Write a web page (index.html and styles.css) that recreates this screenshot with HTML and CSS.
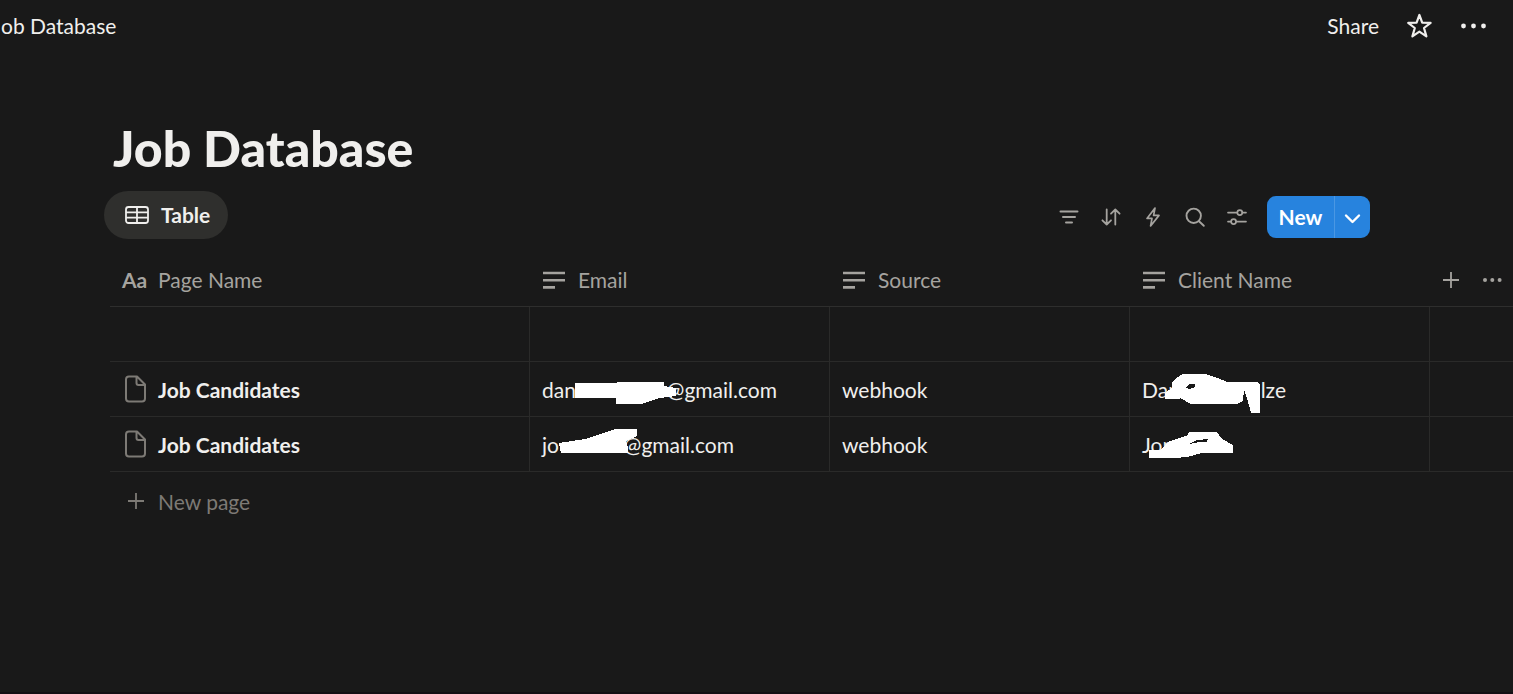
FILE: index.html
```html
<!DOCTYPE html>
<html lang="en">
<head>
    <meta charset="UTF-8">
    <meta name="viewport" content="width=device-width, initial-scale=1.0">
    <title>Job Database</title>
    <link rel="stylesheet" href="styles.css">
</head>
<body>
    <header class="topbar">
        <a class="breadcrumb" href="#">ob Database</a>
        <div class="topbar-actions">
            <button class="share-btn" type="button">Share</button>
            <button class="icon-btn light" type="button" aria-label="Favorite">
                <svg width="28" height="28" viewBox="0 0 28 28" fill="none" stroke="currentColor" stroke-width="2.2" stroke-linejoin="round"><path d="M14.4 3 L17.2 10.6 L25.6 10.9 L19 16 L21.4 24.4 L14.4 19.7 L7.4 24.4 L9.8 16 L3.2 10.9 L11.6 10.6 Z"/></svg>
            </button>
            <button class="icon-btn light" type="button" aria-label="More">
                <svg width="28" height="28" viewBox="0 0 28 28" fill="currentColor"><circle cx="4.5" cy="14" r="2.4"/><circle cx="14.5" cy="14" r="2.4"/><circle cx="24.5" cy="14" r="2.4"/></svg>
            </button>
        </div>
    </header>

    <main>
        <h1>Job Database</h1>

        <div class="toolbar">
            <button class="view-tab" type="button">
                <svg width="24" height="20" viewBox="0 0 24 20" fill="none" stroke="currentColor" stroke-width="1.8"><rect x="1" y="2" width="22" height="16" rx="2.5"/><path d="M1 7.3 H23 M1 12.7 H23 M12 2 V18"/></svg>
                Table
            </button>
            <div class="tools">
                <button class="icon-btn" type="button" aria-label="Filter">
                    <svg width="22" height="22" viewBox="0 0 22 22" fill="none" stroke="currentColor" stroke-width="2" stroke-linecap="round"><path d="M2.5 5.5 H19.5 M5 11 H17 M8 16.5 H14"/></svg>
                </button>
                <button class="icon-btn" type="button" aria-label="Sort">
                    <svg width="22" height="22" viewBox="0 0 22 22" fill="none" stroke="currentColor" stroke-width="1.8" stroke-linecap="round" stroke-linejoin="round"><path d="M6.7 3.5 V18.5 M2.4 14.3 L6.7 18.5 L11 14.3 M15.3 18.5 V3.5 M11 7.7 L15.3 3.5 L19.6 7.7"/></svg>
                </button>
                <button class="icon-btn" type="button" aria-label="Automations">
                    <svg width="22" height="22" viewBox="0 0 22 22" fill="none" stroke="currentColor" stroke-width="1.7" stroke-linejoin="round"><path d="M13 2 L5 12.4 H10 L8.6 20 L17 9.4 H11.6 Z"/></svg>
                </button>
                <button class="icon-btn" type="button" aria-label="Search">
                    <svg width="22" height="22" viewBox="0 0 22 22" fill="none" stroke="currentColor" stroke-width="1.9" stroke-linecap="round"><circle cx="9.7" cy="9.8" r="7.2"/><path d="M15 15.2 L19.8 19.8"/></svg>
                </button>
                <button class="icon-btn" type="button" aria-label="Settings">
                    <svg width="22" height="22" viewBox="0 0 22 22" fill="none" stroke="currentColor" stroke-width="1.7" stroke-linecap="round"><path d="M2 6.6 H11.2 M16.4 6.6 H20 M2 15.6 H5 M10.2 15.6 H20"/><circle cx="13.8" cy="6.6" r="2.5"/><circle cx="7.6" cy="15.6" r="2.5"/></svg>
                </button>
                <div class="new-group">
                    <button class="new-btn" type="button">New</button>
                    <button class="new-more" type="button" aria-label="New options">
                        <svg width="18" height="14" viewBox="0 0 18 14" fill="none" stroke="currentColor" stroke-width="2.4" stroke-linecap="round" stroke-linejoin="round"><path d="M2 5.5 L8.5 12 L15 5.5"/></svg>
                    </button>
                </div>
            </div>
        </div>

        <table>
            <colgroup>
                <col class="col-name">
                <col class="col-text">
                <col class="col-text">
                <col class="col-text">
                <col>
            </colgroup>
            <thead>
                <tr>
                    <th scope="col">
                        <div class="head"><span class="aa" aria-hidden="true">Aa</span>Page Name</div>
                    </th>
                    <th scope="col">
                        <div class="head">
                            <svg width="24" height="20" viewBox="0 0 24 20" stroke="currentColor" stroke-width="2.6"><path d="M1 3 H23 M1 10.2 H23 M1 17.4 H13"/></svg>
                            Email
                        </div>
                    </th>
                    <th scope="col">
                        <div class="head">
                            <svg width="24" height="20" viewBox="0 0 24 20" stroke="currentColor" stroke-width="2.6"><path d="M1 3 H23 M1 10.2 H23 M1 17.4 H13"/></svg>
                            Source
                        </div>
                    </th>
                    <th scope="col">
                        <div class="head">
                            <svg width="24" height="20" viewBox="0 0 24 20" stroke="currentColor" stroke-width="2.6"><path d="M1 3 H23 M1 10.2 H23 M1 17.4 H13"/></svg>
                            Client Name
                        </div>
                    </th>
                    <th>
                        <div class="head-actions">
                            <button class="icon-btn" type="button" aria-label="Add property">
                                <svg width="20" height="20" viewBox="0 0 20 20" stroke="currentColor" stroke-width="1.8"><path d="M2 10 H18 M10 2 V18"/></svg>
                            </button>
                            <button class="icon-btn" type="button" aria-label="More properties">
                                <svg width="20" height="20" viewBox="0 0 20 20" fill="currentColor"><circle cx="3" cy="10" r="2"/><circle cx="10.3" cy="10" r="2"/><circle cx="17.6" cy="10" r="2"/></svg>
                            </button>
                        </div>
                    </th>
                </tr>
            </thead>
            <tbody>
                <tr>
                    <td></td>
                    <td></td>
                    <td></td>
                    <td></td>
                    <td></td>
                </tr>
                <tr>
                    <td>
                        <a class="page-link" href="#">
                            <svg width="24" height="28" viewBox="0 0 24 28" fill="none" stroke="currentColor" stroke-width="2" stroke-linejoin="round"><path d="M5 0.5 H13 L21 8.5 V22.5 Q21 25.5 18 25.5 H5 Q2 25.5 2 22.5 V3.5 Q2 0.5 5 0.5 Z M12.5 0.5 V7 Q12.5 9 14.5 9 H21"/></svg>
                            Job Candidates
                        </a>
                    </td>
                    <td>
                        <div class="masked email-wide"><span>dan</span><span>@gmail.com</span></div>
                        <svg class="scribble" width="300" height="55" viewBox="0 0 300 55" shape-rendering="crispEdges"><path d="M45 21 H87 V20 H134 V24 L146 26 V34 L130 36 L111 42 H86 V36 H45 Z"/></svg>
                    </td>
                    <td>webhook</td>
                    <td>
                        <div class="masked client-wide"><span>Dan</span><span>lze</span></div>
                        <svg class="scribble" width="300" height="55" viewBox="0 0 300 55" shape-rendering="crispEdges"><path fill-rule="evenodd" d="M35 31 L42 26 V20 L46 16 L53 12 H75 L88 16 L97 20 H127 L130 23 V51 H121 L117 36 L114 28 L113 39 L107 42 H61 L50 36 V37 H35 Z M55 26 L60 22 H65 V25 L60 27 Z"/></svg>
                    </td>
                    <td></td>
                </tr>
                <tr>
                    <td>
                        <a class="page-link" href="#">
                            <svg width="24" height="28" viewBox="0 0 24 28" fill="none" stroke="currentColor" stroke-width="2" stroke-linejoin="round"><path d="M5 0.5 H13 L21 8.5 V22.5 Q21 25.5 18 25.5 H5 Q2 25.5 2 22.5 V3.5 Q2 0.5 5 0.5 Z M12.5 0.5 V7 Q12.5 9 14.5 9 H21"/></svg>
                            Job Candidates
                        </a>
                    </td>
                    <td>
                        <div class="masked email-narrow"><span>jo</span><span>@gmail.com</span></div>
                        <svg class="scribble" width="300" height="55" viewBox="0 0 300 55" shape-rendering="crispEdges"><path d="M29 26 L55 22 L85 12 H107 V19 L96 24 L98 30 V36 H31 Z"/></svg>
                    </td>
                    <td>webhook</td>
                    <td>
                        <div class="masked"><span>Jon</span></div>
                        <svg class="scribble" width="300" height="55" viewBox="0 0 300 55" shape-rendering="crispEdges"><path fill-rule="evenodd" d="M19 33 H30 L40 24 L58 18 L59 15 H87 L92 22 L103 28 V36 H72 L57 40 L45 41 H19 Z M59 27 L67 23 L78 22 L77 25 L70 25 Z"/></svg>
                    </td>
                    <td></td>
                </tr>
            </tbody>
        </table>

        <button class="new-page" type="button">
            <svg width="20" height="20" viewBox="0 0 20 20" stroke="currentColor" stroke-width="1.8"><path d="M2 9 H18 M10 1 V17"/></svg>
            New page
        </button>
    </main>
</body>
</html>
```
FILE: styles.css
```css
* {
    box-sizing: border-box;
}
body {
    margin: 0;
    min-height: 100vh;
    background: #191919;
    border-bottom: 2px solid #130f14;
    color: #f0efed;
    font-family: Lato, "Open Sans", sans-serif;
    font-size: 21px;
    line-height: 28px;
    overflow-x: hidden;
}
button {
    display: flex;
    align-items: center;
    justify-content: center;
    padding: 0;
    border: none;
    background: transparent;
    color: inherit;
    font: inherit;
    cursor: pointer;
}
a {
    color: inherit;
    text-decoration: none;
}
svg {
    display: block;
    flex-shrink: 0;
    overflow: visible;
}
.topbar {
    display: flex;
    align-items: center;
    justify-content: space-between;
    height: 52px;
    padding: 0 20px 0 1px;
}
.topbar-actions {
    display: flex;
    align-items: center;
}
.share-btn {
    margin-right: 20px;
}
.icon-btn {
    width: 42px;
    height: 42px;
    color: #a5a39f;
}
.icon-btn.light {
    width: 40px;
    color: #f0efed;
}
.icon-btn.light + .icon-btn.light {
    margin-left: 14px;
}
main {
    padding-left: 110px;
}
h1 {
    margin: 66px 0 13px;
    padding-left: 3px;
    font-size: 50px;
    line-height: 60px;
    font-weight: 900;
}
.toolbar {
    display: flex;
    align-items: center;
    justify-content: space-between;
    padding-right: 143px;
    margin-left: -6px;
}
.view-tab {
    gap: 12px;
    height: 48px;
    padding: 0 18px 0 21px;
    border-radius: 24px;
    background: #2f2f2d;
    font-weight: 700;
}
.tools {
    display: flex;
    align-items: center;
    padding-top: 4px;
}
.new-group {
    display: flex;
    height: 42px;
    margin-left: 9px;
    border-radius: 9px;
    overflow: hidden;
    background: #2783de;
    color: #fff;
}
.new-btn {
    width: 67px;
    font-weight: 700;
}
.new-more {
    width: 36px;
    border-left: 1px solid #4a97e3;
}
table {
    width: 100%;
    margin-top: 16px;
    border-collapse: separate;
    border-spacing: 0;
    table-layout: fixed;
}
.col-name {
    width: 420px;
}
.col-text {
    width: 300px;
}
th {
    height: 52px;
    padding: 0 12px 2px;
    border-bottom: 1px solid #2e2e2d;
    color: #a5a39f;
    font-weight: 400;
    text-align: left;
}
td {
    position: relative;
    height: 55px;
    padding: 2px 12px 0;
    border-bottom: 1px solid #2a2a29;
    border-right: 1px solid #2a2a29;
}
th:last-child,
td:last-child {
    padding: 0 0 2px;
    border-right: none;
}
.head {
    display: flex;
    align-items: center;
    gap: 12px;
}
.aa {
    width: 24px;
    font-weight: 700;
}
.head-actions {
    display: flex;
}
.page-link {
    display: flex;
    align-items: center;
    gap: 10px;
    padding-left: 2px;
    font-weight: 700;
}
.page-link svg {
    color: #7d7a75;
}
.masked {
    display: flex;
    justify-content: space-between;
}
.email-wide {
    width: 235px;
}
.email-narrow {
    width: 192px;
}
.client-wide {
    width: 144px;
}
.scribble {
    position: absolute;
    top: 0;
    left: 0;
    fill: #fff;
}
.new-page {
    gap: 12px;
    height: 60px;
    padding-left: 16px;
    color: #7d7a75;
}
```
